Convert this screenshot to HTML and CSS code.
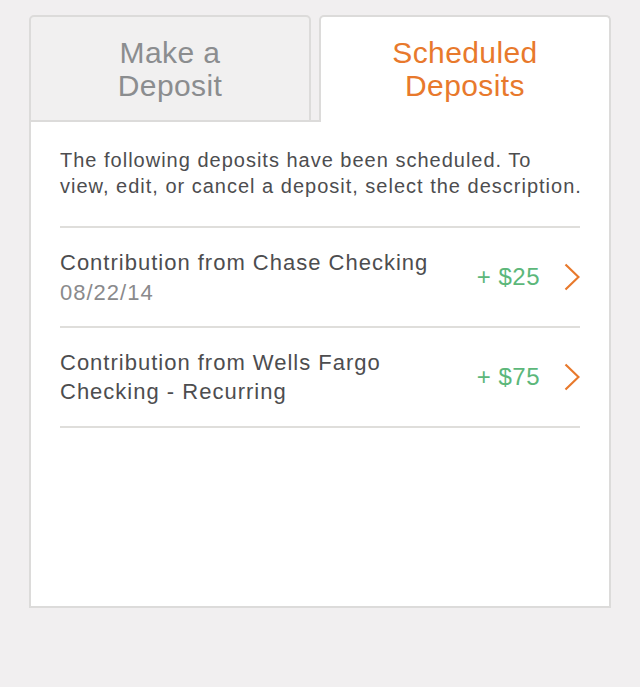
FILE: index.html
```html
<!DOCTYPE html>
<html lang="en">
<head>
<meta charset="utf-8">
<title>Scheduled Deposits</title>
<link rel="stylesheet" href="styles.css">
</head>
<body>
<div class="card">
  <div class="tabs">
    <div class="tab tab-inactive">Make a<br>Deposit</div>
    <div class="tab-gap"></div>
    <div class="tab tab-active">Scheduled<br>Deposits</div>
  </div>
  <div class="panel">
    <p class="intro">The following deposits have been scheduled. To<br>view, edit, or cancel a deposit, select the description.</p>
    <div class="row">
      <div class="info">
        <div class="title">Contribution from Chase Checking</div>
        <div class="date">08/22/14</div>
      </div>
      <div class="amount">+ $25</div>
      <svg class="chev" width="16" height="28" viewBox="0 0 16 28"><polyline points="1.5,1.5 14.5,14 1.5,26.5" fill="none" stroke="#e8792c" stroke-width="2.2"/></svg>
    </div>
    <div class="row">
      <div class="info">
        <div class="title">Contribution from Wells Fargo Checking - Recurring</div>
      </div>
      <div class="amount">+ $75</div>
      <svg class="chev" width="16" height="28" viewBox="0 0 16 28"><polyline points="1.5,1.5 14.5,14 1.5,26.5" fill="none" stroke="#e8792c" stroke-width="2.2"/></svg>
    </div>
  </div>
</div>
</body>
</html>
```
FILE: styles.css
```css
html, body {
  margin: 0;
  padding: 0;
  background: #f1eff0;
}
body {
  font-family: "Liberation Sans", Arial, Helvetica, sans-serif;
  width: 640px;
  height: 687px;
}
.card {
  margin: 15px 29px 0 29px;
  width: 582px;
}
.tabs {
  display: flex;
  height: 107px;
}
.tab {
  box-sizing: border-box;
  border: 2px solid #dcdbda;
  border-radius: 5px 5px 0 0;
  text-align: center;
  font-size: 30px;
  line-height: 33px;
  letter-spacing: 0.4px;
  padding-top: 19px;
}
.tab-inactive {
  width: 282px;
  background: #f1f0f0;
  color: #8b8d8f;
}
.tab-gap {
  width: 8px;
  box-sizing: border-box;
  border-bottom: 2px solid #dcdbda;
}
.tab-active {
  flex: 1;
  background: #fff;
  color: #e8792c;
  border-bottom: none;
}
.panel {
  box-sizing: border-box;
  height: 486px;
  background: #fff;
  border: 2px solid #dcdbda;
  border-top: none;
  padding: 25px 29px 0 29px;
}
.intro {
  margin: 0 0 27px 0;
  font-size: 20px;
  line-height: 26px;
  letter-spacing: 1px;
  color: #4d4d4f;
  white-space: nowrap;
}
.row {
  display: flex;
  align-items: center;
  height: 100px;
  box-sizing: border-box;
  border-top: 2px solid #dfdedb;
}
.row:last-child {
  border-bottom: 2px solid #dfdedb;
  height: 102px;
}
.info {
  flex: 1;
  align-self: flex-start;
  margin-top: 20px;
  font-size: 22px;
  line-height: 29px;
  letter-spacing: 1px;
}
.title {
  color: #4d4d4f;
  width: 380px;
}
.date {
  color: #8a8a8c;
  margin-top: 1px;
}
.amount {
  color: #5cb77a;
  font-size: 24px;
  letter-spacing: 0.5px;
  margin-right: 24px;
}
.chev {
  display: block;
  flex: none;
}
```
